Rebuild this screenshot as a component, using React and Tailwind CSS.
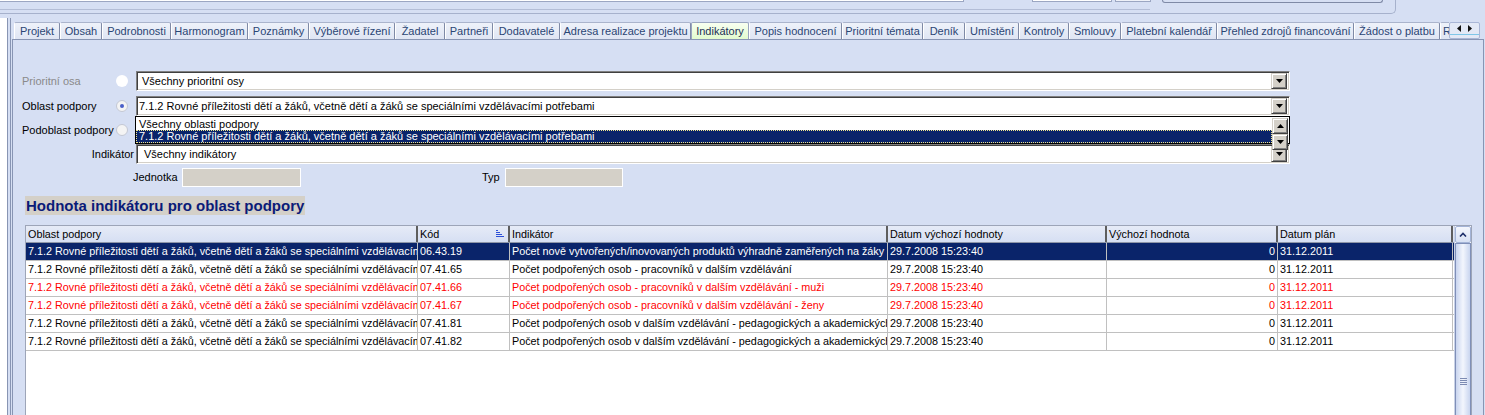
import React from 'react'

const tabs = [
  { label: 'Projekt', w: 46 },
  { label: 'Obsah', w: 42 },
  { label: 'Podrobnosti', w: 69 },
  { label: 'Harmonogram', w: 77 },
  { label: 'Poznámky', w: 61 },
  { label: 'Výběrové řízení', w: 86 },
  { label: 'Žadatel', w: 50 },
  { label: 'Partneři', w: 48 },
  { label: 'Dodavatelé', w: 67 },
  { label: 'Adresa realizace projektu', w: 131 },
  { label: 'Indikátory', w: 58, active: true },
  { label: 'Popis hodnocení', w: 93 },
  { label: 'Prioritní témata', w: 81 },
  { label: 'Deník', w: 42 },
  { label: 'Umístění', w: 54 },
  { label: 'Kontroly', w: 50 },
  { label: 'Smlouvy', w: 52 },
  { label: 'Platební kalendář', w: 96 },
  { label: 'Přehled zdrojů financování', w: 137 },
  { label: 'Žádost o platbu', w: 86 },
]

const columns = [
  { title: 'Oblast podpory', w: 392 },
  { title: 'Kód', w: 92, sort: true },
  { title: 'Indikátor', w: 378 },
  { title: 'Datum výchozí hodnoty', w: 219 },
  { title: 'Výchozí hodnota', w: 171, right: true },
  { title: 'Datum plán', w: 175 },
]

const oblast = '7.1.2 Rovné příležitosti dětí a žáků, včetně dětí a žáků se speciálními vzdělávacími potřebami'

const rows = [
  { kod: '06.43.19', ind: 'Počet nově vytvořených/inovovaných produktů výhradně zaměřených na žáky se speciálními vzdělávacími potřebami', tone: 'sel' },
  { kod: '07.41.65', ind: 'Počet podpořených osob - pracovníků v dalším vzdělávání', tone: 'black' },
  { kod: '07.41.66', ind: 'Počet podpořených osob - pracovníků v dalším vzdělávání - muži', tone: 'red' },
  { kod: '07.41.67', ind: 'Počet podpořených osob - pracovníků v dalším vzdělávání - ženy', tone: 'red' },
  { kod: '07.41.81', ind: 'Počet podpořených osob v dalším vzdělávání - pedagogických a akademických pracovníků', tone: 'black' },
  { kod: '07.41.82', ind: 'Počet podpořených osob v dalším vzdělávání - pedagogických a akademických pracovníků', tone: 'black' },
]

// malé tlačítko se šipkou (Win classic)
const ArrowBtn = ({ up = false, className = '' }) => (
  <div
    className={
      'w-[16px] h-[16px] bg-[#d4d0c8] border border-t-[#d4d0c8] border-l-[#d4d0c8] border-b-[#404040] border-r-[#404040] shadow-[inset_1px_1px_0_#fff,inset_-1px_-1px_0_#808080] flex items-center justify-center shrink-0 ' +
      className
    }
  >
    <svg width="7" height="4" viewBox="0 0 7 4">
      <polygon points={up ? '3.5,0 7,4 0,4' : '0,0 7,0 3.5,4'} fill="#000" />
    </svg>
  </div>
)

const Select = ({ text, textClass = 'pl-[4px]', children }) => (
  <div className="relative w-[1154px] h-[20px] bg-white border border-t-[#808080] border-l-[#808080] border-b-white border-r-white shadow-[inset_1px_1px_0_#404040,inset_-1px_-1px_0_#d4d0c8] flex items-center">
    <div className={'flex-1 whitespace-nowrap overflow-hidden text-black ' + textClass}>{text}</div>
    <ArrowBtn className="mr-[2px]" />
    {children}
  </div>
)

const Radio = ({ checked = false, plain = false }) => (
  <div
    className={
      plain
        ? 'w-[12px] h-[12px] rounded-full bg-white'
        : 'w-[12px] h-[12px] rounded-full bg-[#f4f4f4] border border-[#c4c8d4] flex items-center justify-center'
    }
  >
    {checked && <div className="w-[4px] h-[4px] rounded-full bg-[#4a5fc8]" />}
  </div>
)

const Tab = ({ label, w, active }) => (
  <div
    style={{ width: w }}
    className={
      active
        ? 'h-[17px] shrink-0 flex items-center justify-center border border-b-0 border-[#9aa6c0] rounded-t-[2px] bg-gradient-to-b from-[#f8fff0] to-[#e2fbcf] text-[#1c2f55] whitespace-nowrap'
        : 'h-[17px] shrink-0 flex items-center justify-center border border-b-0 border-l-white border-t-[#aab4cc] border-r-[#7f8aa6] rounded-t-[2px] bg-gradient-to-b from-[#eef2fa] to-[#dfe5f3] text-[#2a4574] whitespace-nowrap'
    }
  >
    {label}
  </div>
)

const SortIcon = () => (
  <svg width="8" height="8" viewBox="0 0 8 8" className="shrink-0">
    <rect x="0" y="0" width="2" height="1" fill="#2c4fd8" />
    <rect x="0" y="2" width="4" height="1" fill="#2c4fd8" />
    <rect x="0" y="4" width="6" height="1" fill="#2c4fd8" />
    <rect x="0" y="6" width="8" height="1" fill="#2c4fd8" />
  </svg>
)

export default function App() {
  return (
    <div className="w-[1485px] h-[415px] overflow-hidden bg-[#d6dff3] font-['Liberation_Sans',Arial,sans-serif] text-[11px] leading-none">
      {/* Horní pruh (oříznutá skupina nahoře) */}
      <div className="h-[18px]">
        <div className="w-[1396px] h-[14px] border-b border-r border-[#a6b1cc] rounded-br-[5px] flex flex-col">
          <div className="flex items-start h-[3px]">
            <div className="w-[964px] h-[2px] bg-white border-b border-r border-[#9ba6c2]" />
            <div className="w-[80px] h-[2px] ml-[68px] bg-white border-b border-l border-r border-[#9ba6c2]" />
            <div className="w-[36px] h-[2px] ml-[3px] bg-[#eef1f8] border-b border-l border-r border-[#9ba6c2]" />
            <div className="w-[221px] h-[3px] ml-[11px] border-b border-l border-r border-[#7f8aa6] rounded-b-[3px]" />
          </div>
          <div className="mt-[6px] w-[1150px] h-px bg-[#b3bdd6]" />
        </div>
      </div>

      <div className="flex h-[397px]">
        {/* Levý okraj */}
        <div className="w-[7px] bg-white" />
        <div className="w-px bg-[#8895b3]" />
        <div className="w-[2px]" />
        <div className="w-px bg-[#8895b3]" />
        <div className="w-px" />

        {/* Hlavní panel */}
        <div className="w-[1472px] pt-[4px]">
          {/* Záložky */}
          <div className="flex items-end ml-[2px] h-[17px]">
            {tabs.map((t) => (
              <Tab key={t.label} {...t} />
            ))}
            <div className="w-[9px] h-[17px] shrink-0 border border-b-0 border-l-white border-t-[#aab4cc] border-r-0 rounded-tl-[2px] bg-gradient-to-b from-[#eef2fa] to-[#dfe5f3] text-[#2a4574] overflow-hidden pl-[2px] flex items-center">
              R
            </div>
            <div className="w-[31px] h-[17px] shrink-0 border border-[#a9b6d6] rounded-[2px] bg-[#e3e9f6] flex flex-col">
              <div className="flex-1 flex items-center justify-center gap-[7px]">
                <svg width="4" height="7" viewBox="0 0 4 7"><polygon points="4,0 4,7 0,3.5" fill="#111" /></svg>
                <svg width="4" height="7" viewBox="0 0 4 7"><polygon points="0,0 0,7 4,3.5" fill="#111" /></svg>
              </div>
              <div className="h-px bg-[#7fc6e8] mb-[3px]" />
            </div>
          </div>

          <div className="h-[376px] border-t border-l border-r border-[#8895b3]">
            <div className="pl-[9px] pt-[31px]">
              {/* Prioritní osa */}
              <div className="flex items-center h-[20px]">
                <div className="w-[94px] text-[#8a8a8a]">Prioritní osa</div>
                <div className="w-[20px]"><Radio plain /></div>
                <Select text="Všechny prioritní osy" textClass="pl-[5px]" />
              </div>

              {/* Oblast podpory + rozbalený seznam */}
              <div className="flex items-center h-[20px] mt-[5px] relative z-10">
                <div className="w-[94px] text-black">Oblast podpory</div>
                <div className="w-[20px]"><Radio checked /></div>
                <Select text={oblast} textClass="pl-[2px]">
                  <div className="absolute left-[-2px] top-[19px] w-[1155px] h-[28px] bg-white border border-black flex">
                    <div className="flex-1 flex flex-col pt-px">
                      <div className="h-[13px] pl-[3px] flex items-center whitespace-nowrap">Všechny oblasti podpory</div>
                      <div className="h-[13px] pl-[2px] bg-[#0a246a] text-white border border-dotted border-[#f0e68c] flex items-center whitespace-nowrap">
                        {oblast}
                      </div>
                    </div>
                    <div className="flex flex-col pt-px pr-px">
                      <ArrowBtn up className="h-[12px]" />
                      <ArrowBtn className="h-[12px]" />
                    </div>
                  </div>
                </Select>
              </div>

              {/* Podoblast podpory */}
              <div className="flex items-center h-[20px] mt-[4px]">
                <div className="w-[94px] text-black">Podoblast podpory</div>
                <div className="w-[20px]"><Radio /></div>
                <Select text="Všechny podoblasti" textClass="pl-[5px]" />
              </div>

              {/* Indikátor */}
              <div className="flex items-center h-[20px] mt-[4px]">
                <div className="w-[114px] pr-[2px] text-right text-black">Indikátor</div>
                <Select text="Všechny indikátory" textClass="pl-[7px]" />
              </div>

              {/* Jednotka / Typ */}
              <div className="flex items-center h-[19px] mt-[4px]">
                <div className="w-[111px]" />
                <div className="w-[49px] text-black whitespace-nowrap">Jednotka</div>
                <div className="w-[119px] h-[19px] bg-[#d4d0c8] border border-white" />
                <div className="w-[181px]" />
                <div className="w-[23px] text-black">Typ</div>
                <div className="w-[118px] h-[19px] bg-[#d4d0c8] border border-white" />
              </div>

              {/* Nadpis */}
              <div className="mt-[9px] ml-[3px] w-[280px] h-[19px] bg-[#d4d0c8] flex items-center pl-px">
                <span className="text-[15px] font-bold text-[#0b1b78] whitespace-nowrap">Hodnota indikátoru pro oblast podpory</span>
              </div>
            </div>

            {/* Tabulka */}
            <div className="mt-[10px] ml-[12px] w-[1447px] h-[200px] bg-white border border-[#9da5b8] flex text-[10.8px]">
              <div className="flex-1 flex flex-col">
                <div className="flex h-[17px] bg-gradient-to-b from-[#e6ebf7] to-[#d6dff3] border-b border-[#8e96a8]">
                  {columns.map((c) => (
                    <div
                      key={c.title}
                      style={{ width: c.w }}
                      className="shrink-0 flex items-center justify-between pl-[2px] pr-[4px] border-r-2 border-r-[#5e5e5e] whitespace-nowrap overflow-hidden text-black"
                    >
                      <span>{c.title}</span>
                      {c.sort && <SortIcon />}
                    </div>
                  ))}
                </div>
                {rows.map((r) => (
                  <div
                    key={r.kod}
                    className={
                      r.tone === 'sel'
                        ? 'flex h-[18px] bg-[#0a246a] text-white border-b border-[#c0c0c0]'
                        : r.tone === 'red'
                        ? 'flex h-[18px] text-[#ff0000] border-b border-[#c0c0c0]'
                        : 'flex h-[18px] text-black border-b border-[#c0c0c0]'
                    }
                  >
                    {[oblast, r.kod, r.ind, '29.7.2008 15:23:40', '0', '31.12.2011'].map((v, i) => (
                      <div
                        key={i}
                        style={{ width: columns[i].w }}
                        className={
                          columns[i].right
                            ? 'shrink-0 flex items-center justify-end pr-[2px] border-r border-[#c0c0c0] whitespace-nowrap overflow-hidden'
                            : 'shrink-0 flex items-center pl-[2px] border-r border-[#c0c0c0] whitespace-nowrap overflow-hidden'
                        }
                      >
                        {v}
                      </div>
                    ))}
                  </div>
                ))}
              </div>

              {/* Posuvník */}
              <div className="w-[17px] flex flex-col border-l border-[#c9d2e6]">
                <div className="h-[17px] border border-[#a3b3d6] rounded-[2px] bg-gradient-to-b from-[#f4f7fd] to-[#d8e1f4] flex items-center justify-center">
                  <svg width="8" height="5" viewBox="0 0 8 5"><polyline points="1,4.5 4,1.5 7,4.5" fill="none" stroke="#1c2f6a" strokeWidth="1.6" /></svg>
                </div>
                <div className="flex-1 border border-[#7f8fb8] bg-gradient-to-r from-[#c9d5ef] via-[#f3f6fd] to-[#c9d5ef] flex flex-col items-center">
                  <div className="mt-[134px] flex flex-col gap-px">
                    <div className="w-[7px] h-px bg-[#7d8bb2]" />
                    <div className="w-[7px] h-px bg-[#7d8bb2]" />
                    <div className="w-[7px] h-px bg-[#7d8bb2]" />
                    <div className="w-[7px] h-px bg-[#7d8bb2]" />
                  </div>
                </div>
              </div>
            </div>
          </div>
        </div>
      </div>
    </div>
  )
}
